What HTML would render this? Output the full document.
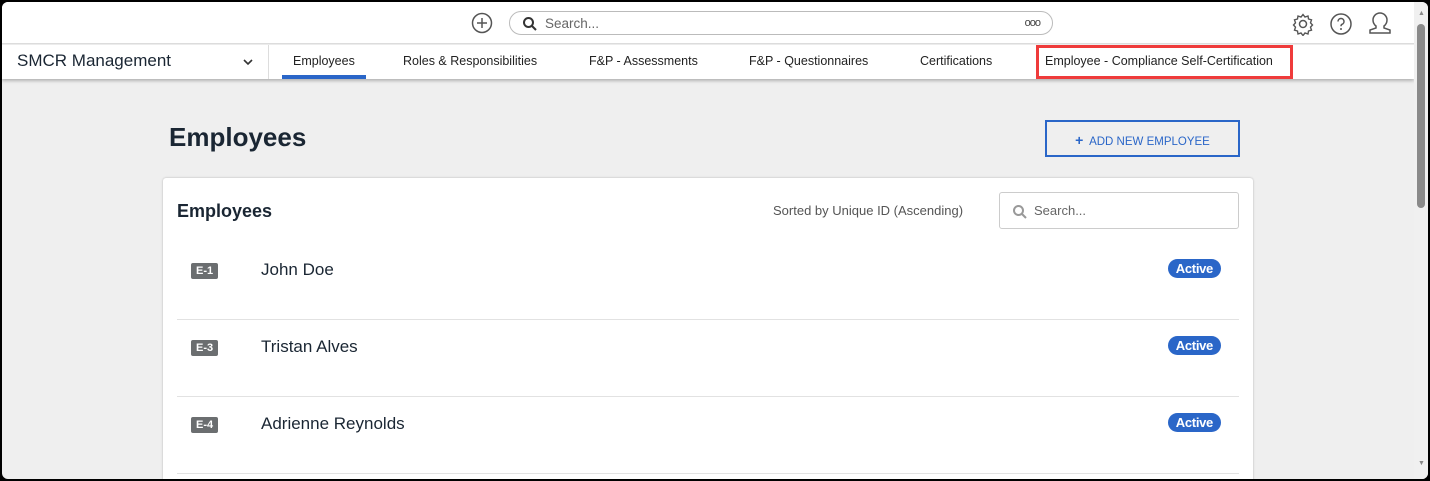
<!DOCTYPE html>
<html><head><style>
*{box-sizing:border-box;margin:0;padding:0}
body{width:1430px;height:481px;overflow:hidden;background:#000;font-family:"Liberation Sans",sans-serif;}
.frame{position:absolute;left:2px;top:2px;width:1426px;height:477px;background:#efefef;border-radius:6px;overflow:hidden}
.top{position:absolute;left:0;top:0;width:1412px;height:42px;background:#fff;border-bottom:1px solid #ddd}
.nav{position:absolute;left:0;top:43px;width:1412px;height:34px;background:#fff;box-shadow:0 2px 3px rgba(0,0,0,.25)}
.nav span{position:absolute;top:9px;font-size:12.5px;color:#222}
.sb{position:absolute;right:0;top:0;width:14px;height:477px;background:#f0f0f0}
.card{position:absolute;left:161px;top:176px;width:1090px;height:320px;background:#fff;border-radius:3px;box-shadow:0 0 2px rgba(0,0,0,.25)}
.row{position:absolute;left:14px;width:1062px;height:77px;border-bottom:1px solid #e2e2e2}
.badge{position:absolute;left:14px;top:20px;background:#6b6e70;color:#fff;font-size:11px;font-weight:bold;padding:2px 5px;border-radius:2px}
.name{position:absolute;left:84px;top:17px;font-size:17px;color:#1a2633}
.act{position:absolute;right:18px;top:16px;background:#2a66c8;color:#fff;font-size:13px;font-weight:bold;padding:2px 8px;border-radius:10px;letter-spacing:-0.3px}
</style></head><body><div class="frame">
<div class="top">
<svg style="position:absolute;left:469px;top:10px" width="22" height="22" viewBox="0 0 22 22"><circle cx="11" cy="11" r="9.5" fill="none" stroke="#555" stroke-width="1.5"/><path d="M11 6v10M6 11h10" stroke="#555" stroke-width="1.5"/></svg>
<div style="position:absolute;left:507px;top:9px;width:544px;height:24px;border:1px solid #bbb;border-radius:12px">
<svg style="position:absolute;left:12px;top:4px" width="16" height="16" viewBox="0 0 16 16"><circle cx="6.5" cy="6.5" r="4.5" fill="none" stroke="#333" stroke-width="2"/><path d="M10 10l4 4" stroke="#333" stroke-width="2"/></svg>
<span style="position:absolute;left:35px;top:4px;font-size:13.5px;color:#666">Search...</span>
<span style="position:absolute;right:12px;top:5px;font-size:11px;color:#444;letter-spacing:-1px">ooo</span></div>
<svg style="position:absolute;left:1289px;top:10px" width="24" height="24" viewBox="0 0 24 24"><circle cx="12" cy="12" r="3.5" fill="none" stroke="#555" stroke-width="1.5"/><path d="M12 2.5l2 2.5 3-1 .5 3 3 .8-1 3 2 2.2-2 2.2 1 3-3 .8-.5 3-3-1-2 2.5-2-2.5-3 1-.5-3-3-.8 1-3-2-2.2 2-2.2-1-3 3-.8.5-3 3 1z" fill="none" stroke="#555" stroke-width="1.4"/></svg>
<svg style="position:absolute;left:1327px;top:10px" width="24" height="24" viewBox="0 0 24 24"><circle cx="12" cy="12" r="10" fill="none" stroke="#555" stroke-width="1.5"/><path d="M9 9.5a3 3 0 1 1 4 2.8c-.8.4-1 1-1 2" fill="none" stroke="#555" stroke-width="1.5"/><circle cx="12" cy="17" r="1" fill="#555"/></svg>
<svg style="position:absolute;left:1366px;top:10px" width="24" height="24" viewBox="0 0 24 24"><path d="M8 14c-2-1.5-3-4-3-6a7 7 0 0 1 14 0c0 2-1 4.5-3 6v2l6 2v3H2v-3l6-2z" fill="none" stroke="#555" stroke-width="1.5"/></svg>
</div>
<div class="nav">
<span style="left:15px;top:6px;font-size:17px;color:#1a2633">SMCR Management</span>
<svg style="position:absolute;left:241px;top:13px" width="10" height="8" viewBox="0 0 10 8"><path d="M1 2l4 4 4-4" fill="none" stroke="#333" stroke-width="1.6"/></svg>
<div style="position:absolute;left:266px;top:0;width:1px;height:34px;background:#ddd"></div>
<span style="left:291px">Employees</span>
<div style="position:absolute;left:280px;top:30px;width:84px;height:4px;background:#2a66c8"></div>
<span style="left:401px">Roles &amp; Responsibilities</span>
<span style="left:587px">F&amp;P - Assessments</span>
<span style="left:747px">F&amp;P - Questionnaires</span>
<span style="left:918px">Certifications</span>
<div style="position:absolute;left:1034px;top:0;width:257px;height:34px;border:3px solid #ef3b3b"></div>
<span style="left:1043px">Employee - Compliance Self-Certification</span>
</div>
<div style="position:absolute;left:167px;top:120px;font-size:26px;font-weight:bold;color:#1a2633">Employees</div>
<div style="position:absolute;left:1043px;top:118px;width:195px;height:37px;border:2px solid #2a66c8;color:#2a66c8;font-size:11.5px;padding-top:10px;text-align:center"><b style="font-size:14px">+</b>&nbsp; ADD NEW EMPLOYEE</div>
<div class="card">
<div style="position:absolute;left:14px;top:23px;font-size:18px;font-weight:bold;color:#1a2633">Employees</div>
<div style="position:absolute;left:610px;top:25px;font-size:13px;color:#555">Sorted by Unique ID (Ascending)</div>
<div style="position:absolute;left:836px;top:14px;width:240px;height:37px;border:1px solid #ccc;border-radius:3px">
<svg style="position:absolute;left:12px;top:11px" width="16" height="16" viewBox="0 0 16 16"><circle cx="6.5" cy="6.5" r="4.5" fill="none" stroke="#999" stroke-width="2"/><path d="M10 10l4 4" stroke="#999" stroke-width="2"/></svg>
<span style="position:absolute;left:34px;top:10px;font-size:13px;color:#666">Search...</span></div>
<div class="row" style="top:65px"><span class="badge">E-1</span><span class="name">John Doe</span><span class="act">Active</span></div>
<div class="row" style="top:142px"><span class="badge">E-3</span><span class="name">Tristan Alves</span><span class="act">Active</span></div>
<div class="row" style="top:219px"><span class="badge">E-4</span><span class="name">Adrienne Reynolds</span><span class="act">Active</span></div>
</div>
<div class="sb"><div style="position:absolute;left:3px;top:22px;width:8px;height:184px;background:#8a8a8a;border-radius:4px"></div>
<div style="position:absolute;left:4px;top:8px;font-size:7px;color:#888">▲</div><div style="position:absolute;left:4px;top:458px;font-size:7px;color:#888">▼</div></div>
</div></body></html>
